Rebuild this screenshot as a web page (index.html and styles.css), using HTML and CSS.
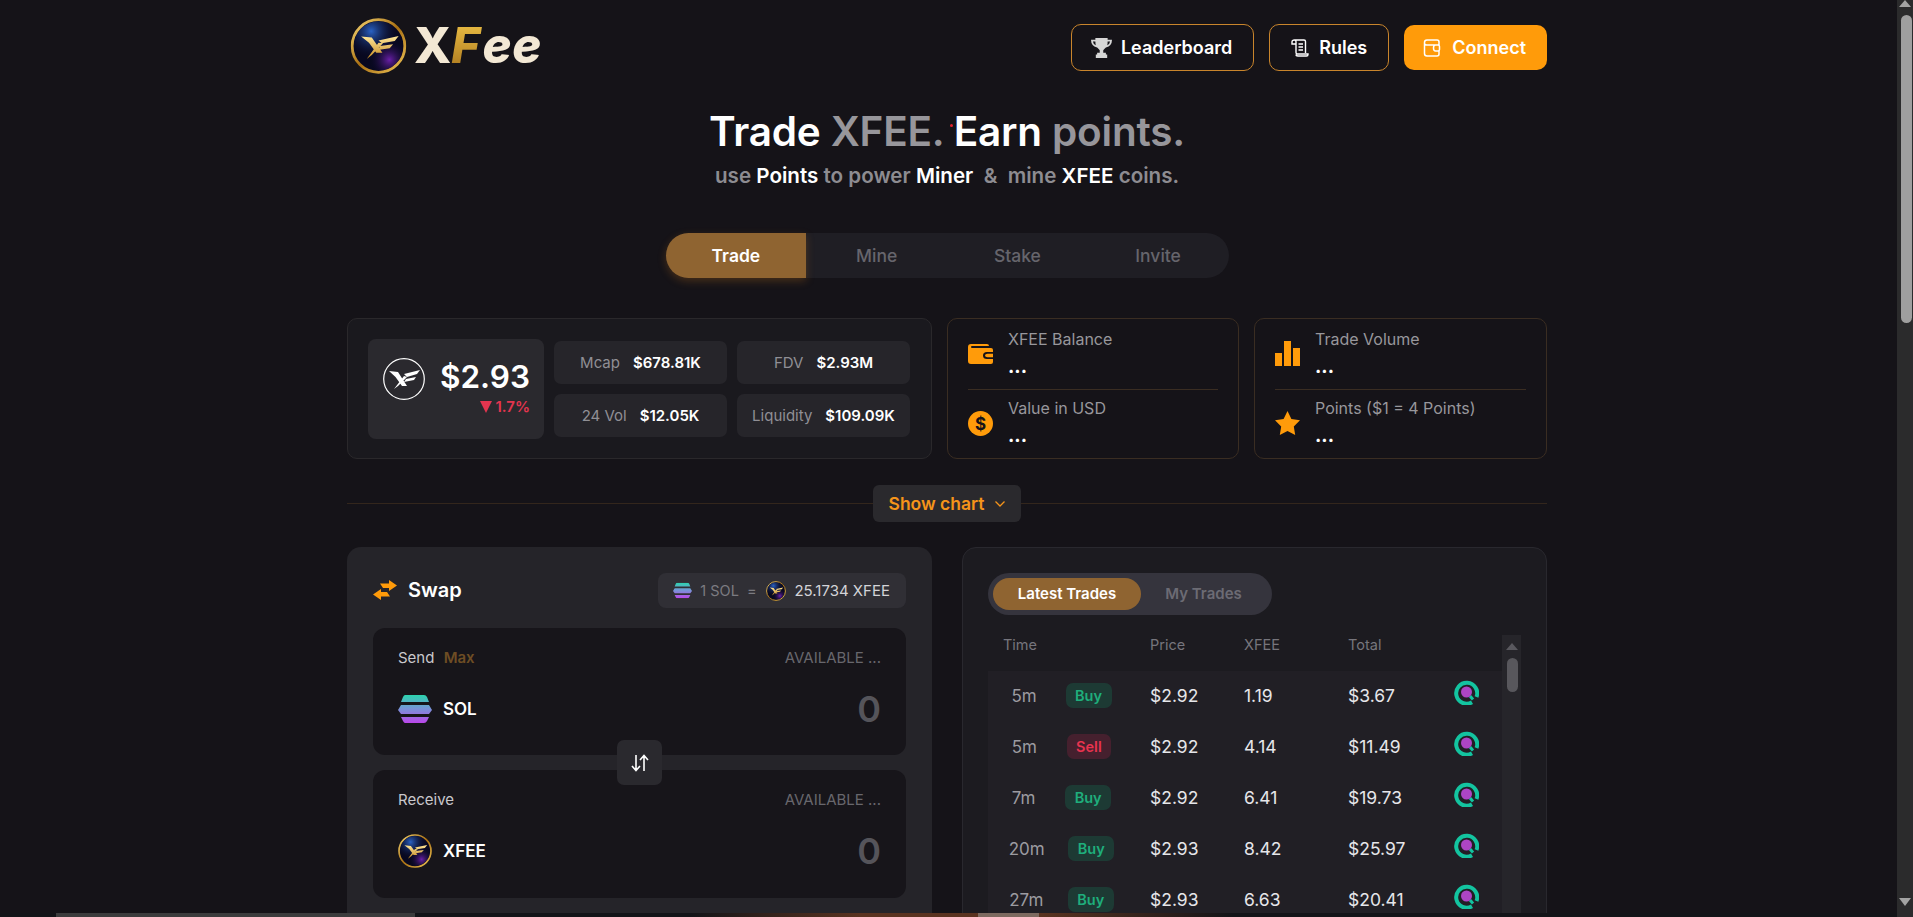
FILE: index.html
```html
<!DOCTYPE html>
<html lang="en">
<head>
<meta charset="utf-8">
<title>XFee</title>
<link rel="stylesheet" href="styles.css">
</head>
<body>
<div class="page">
  <div class="wrap">
    <header class="top">
      <a class="brand">
        <svg class="coin-lg" viewBox="0 0 100 100">
          <defs>
            <linearGradient id="gold" x1="0" y1="0" x2="1" y2="1"><stop offset="0" stop-color="#f7d774"/><stop offset=".5" stop-color="#a86f12"/><stop offset="1" stop-color="#f0c659"/></linearGradient>
            <linearGradient id="markgold" x1="0" y1="0" x2="0" y2="1"><stop offset="0" stop-color="#ffe79a"/><stop offset="1" stop-color="#c58a22"/></linearGradient>
            <radialGradient id="coinblue" cx=".35" cy=".2" r=".55"><stop offset="0" stop-color="#2a62c4"/><stop offset="1" stop-color="#0a0a2a" stop-opacity="0"/></radialGradient>
            <radialGradient id="coinpurple" cx=".72" cy=".78" r=".4"><stop offset="0" stop-color="#6a1fa8"/><stop offset="1" stop-color="#0a0a2a" stop-opacity="0"/></radialGradient>
            <linearGradient id="sol" x1="0" y1="0" x2="0" y2="1"><stop offset="0" stop-color="#2bd4ae"/><stop offset=".5" stop-color="#7a92d8"/><stop offset="1" stop-color="#bb46ea"/></linearGradient>
            <symbol id="coin" viewBox="0 0 100 100">
              <circle cx="50" cy="50" r="47" fill="#08081f" stroke="url(#gold)" stroke-width="5"/>
              <circle cx="50" cy="50" r="44" fill="url(#coinblue)"/>
              <circle cx="50" cy="50" r="44" fill="url(#coinpurple)"/>
              <path fill="url(#markgold)" d="M19 33 38 35 57 62 46 62 33 44ZM29 73 50 44 58 45 38 66ZM50 40 86 32 79 41 56 45ZM53 50 76 47 70 54 49 57Z"/>
            </symbol>
            <symbol id="solana" viewBox="0 0 34 28">
              <path fill="url(#sol)" d="M7 0H26Q28 0 29 2L31 7H3L5 2Q6 0 7 0ZM3 10H31L34 15 31 19H3L0 15ZM3 22H31L29 26Q28 28 26 28H7Q6 28 5 26Z"/>
            </symbol>
            <symbol id="dex" viewBox="0 0 25 25">
              <path fill="none" stroke="#13c4a0" stroke-width="4" d="M18 22.300A10.500 10.500 0 1 1 22.500 17"/>
              <path stroke="#13c4a0" stroke-width="3" d="M16 16 19 19.500"/>
              <circle cx="12.500" cy="12" r="5.500" fill="#ad45c4"/>
            </symbol>
          </defs>
          <use href="#coin"/>
        </svg>
        <span class="wordmark"><span class="wm-x">X</span><span class="wm-f">F</span><span>ee</span></span>
      </a>
      <nav class="actions">
        <a class="btn btn-line btn-lead">
          <svg class="ic21" viewBox="0 0 24 24" fill="#d6d6d6"><path d="M5 1H19V3H24Q24 10 17 12 15 14 14 15V18H17V20H18.500V24H5.500V20H7V18H10V15Q9 14 7 12 0 10 0 3H5ZM2.200 5Q2.600 8 5.500 9.500Q5 7.500 5 5ZM21.800 5H19Q19 7.500 18.500 9.500Q21.400 8 21.800 5Z"/></svg>
          Leaderboard
        </a>
        <a class="btn btn-line">
          <svg class="ic18" viewBox="0 0 18 18" fill="none" stroke="#fff" stroke-width="1.400"><path d="M3.500 1H13Q14.500 1 14.500 2.500V14M3.500 1Q1 1 1 3V5H5M3.500 1Q5 1 5 3V13.500Q5 14.500 6 15H17V15.500Q17 17 15.500 17H7Q5 17 5 15.500M7.500 5H12M7.500 8H12M7.500 11H12"/></svg>
          Rules
        </a>
        <a class="btn btn-fill">
          <svg class="ic18" viewBox="0 0 18 18" fill="none" stroke="#fff" stroke-width="1.500"><path d="M16 6V3Q16 1 14 1H4Q1.500 1 1.500 3.500V14.500Q1.500 17 4 17H14Q16 17 16 15V12M1.500 4.500Q2 6 4 6H15Q16.500 6 16.500 7.500V10.500Q16.500 12 15 12H12.500Q10.500 12 10.500 9T12.500 6"/></svg>
          Connect
        </a>
      </nav>
    </header>

    <section class="hero">
      <h1><b>Trade</b> XFEE. <b>Earn</b> points.</h1>
      <p>use <b>Points</b> to power <b>Miner</b> &nbsp;&amp;&nbsp; mine <b>XFEE</b> coins.</p>
    </section>

    <div class="tabs-row">
      <div class="tabs">
        <a class="tab tab-on">Trade</a>
        <a class="tab">Mine</a>
        <a class="tab">Stake</a>
        <a class="tab">Invite</a>
      </div>
    </div>

    <section class="stats">
      <div class="market">
        <div class="price-box">
          <svg class="xf-round" viewBox="0 0 42 42">
            <circle cx="21" cy="21" r="20.300" fill="none" stroke="#fff" stroke-width="1.200"/>
            <path fill="#fff" d="M6 13 15 14 24 28 19 28 12.500 19ZM11 31 21 18 24 19 15 28ZM21 16 37 12 34 16 24 19ZM23 21 33 19 31 22 21 24Z"/>
          </svg>
          <div class="price-num">
            <div class="price">$2.93</div>
            <div class="change"><span class="tri"></span>1.7%</div>
          </div>
        </div>
        <div class="kv-grid">
          <div class="kv"><span>Mcap</span><b>$678.81K</b></div>
          <div class="kv"><span>FDV</span><b>$2.93M</b></div>
          <div class="kv"><span>24 Vol</span><b>$12.05K</b></div>
          <div class="kv"><span>Liquidity</span><b>$109.09K</b></div>
        </div>
      </div>
      <div class="info-card">
        <div class="info">
          <svg class="ic25" viewBox="0 0 25 25" fill="#ff9b0a"><path d="M3 3H19Q21 3 21 5H4Q3 5 3 6T4 7H23Q25 7 25 9V11H19Q15 11 15 14.500T19 18H25V21Q25 23 23 23H3Q0 23 0 20V6Q0 3 3 3ZM19.500 12.700H25V16.300H19.500Q17 16.300 17 14.500T19.500 12.700Z"/></svg>
          <div class="info-text"><span>XFEE Balance</span><b>...</b></div>
        </div>
        <div class="info">
          <svg class="ic25" viewBox="0 0 25 25"><circle cx="12.500" cy="12.500" r="12.500" fill="#ff9b0a"/><text x="12.500" y="18.500" text-anchor="middle" class="dollar">$</text></svg>
          <div class="info-text"><span>Value in USD</span><b>...</b></div>
        </div>
      </div>
      <div class="info-card">
        <div class="info">
          <svg class="ic25" viewBox="0 0 25 25" fill="#ff9b0a"><rect x="0" y="12" width="7" height="13"/><rect x="9" y="0" width="7" height="25"/><rect x="18" y="7" width="7" height="18"/></svg>
          <div class="info-text"><span>Trade Volume</span><b>...</b></div>
        </div>
        <div class="info">
          <svg class="ic25" viewBox="0 0 25 25" fill="#ff9b0a"><path d="M12.500 0 16.400 8 25 9.300 18.800 15.500 20.200 24 12.500 20 4.800 24 6.200 15.500 0 9.300 8.600 8Z"/></svg>
          <div class="info-text"><span>Points ($1 = 4 Points)</span><b>...</b></div>
        </div>
      </div>
    </section>

    <div class="chart-toggle">
      <a class="show-chart">Show chart
        <svg class="chev" viewBox="0 0 12 8" fill="none" stroke="#f5941a" stroke-width="1.300"><path d="M1.500 1.500 6 6 10.500 1.500"/></svg>
      </a>
    </div>

    <section class="panels">
      <div class="swap">
        <div class="swap-head">
          <h2>
            <svg class="swap-ic" viewBox="0 0 24 20" fill="#ff9b0a"><path d="M7 3.500H16V0L24 5.500 16 11V8H10ZM17 16.500H8V20L0 14.500 8 9V12H14Z"/></svg>
            Swap
          </h2>
          <div class="rate">
            <svg class="ic19" viewBox="0 0 34 28"><use href="#solana"/></svg>
            <span class="rate-dim">1 SOL</span>
            <span class="rate-eq">=</span>
            <svg class="ic19r" viewBox="0 0 100 100"><use href="#coin"/></svg>
            <span class="rate-val">25.1734 XFEE</span>
          </div>
        </div>
        <div class="boxes">
          <div class="box box-send">
            <div class="box-top">
              <span class="box-label">Send <b class="max">Max</b></span>
              <span class="avail">AVAILABLE ...</span>
            </div>
            <div class="box-main">
              <span class="token"><svg class="tok-ic" viewBox="0 0 34 28"><use href="#solana"/></svg>SOL</span>
              <span class="amount">0</span>
            </div>
          </div>
          <a class="flip">
            <svg class="ic18" viewBox="0 0 18 18" fill="none" stroke="#fff" stroke-width="1.600"><path d="M5 1V16M1 12 5 16.500 9 12M13 17V2M9 6 13 1.500 17 6"/></svg>
          </a>
          <div class="box">
            <div class="box-top">
              <span class="box-label">Receive</span>
              <span class="avail">AVAILABLE ...</span>
            </div>
            <div class="box-main">
              <span class="token"><svg class="tok-ic" viewBox="0 0 100 100"><use href="#coin"/></svg>XFEE</span>
              <span class="amount">0</span>
            </div>
          </div>
        </div>
      </div>

      <div class="trades">
        <div class="pill">
          <a class="pill-on">Latest Trades</a>
          <a class="pill-off">My Trades</a>
        </div>
        <div class="table">
          <div class="table-main">
            <div class="tr th">
              <span class="th-time">Time</span><span>Price</span><span>XFEE</span><span>Total</span><span></span>
            </div>
            <div class="tbody">
              <div class="tr"><span class="when"><i>5m</i><em class="buy">Buy</em></span><span>$2.92</span><span>1.19</span><span>$3.67</span><svg class="dex" viewBox="0 0 25 25"><use href="#dex"/></svg></div>
              <div class="tr"><span class="when"><i>5m</i><em class="sell">Sell</em></span><span>$2.92</span><span>4.14</span><span>$11.49</span><svg class="dex" viewBox="0 0 25 25"><use href="#dex"/></svg></div>
              <div class="tr"><span class="when"><i>7m</i><em class="buy">Buy</em></span><span>$2.92</span><span>6.41</span><span>$19.73</span><svg class="dex" viewBox="0 0 25 25"><use href="#dex"/></svg></div>
              <div class="tr"><span class="when"><i>20m</i><em class="buy">Buy</em></span><span>$2.93</span><span>8.42</span><span>$25.97</span><svg class="dex" viewBox="0 0 25 25"><use href="#dex"/></svg></div>
              <div class="tr"><span class="when"><i>27m</i><em class="buy">Buy</em></span><span>$2.93</span><span>6.63</span><span>$20.41</span><svg class="dex" viewBox="0 0 25 25"><use href="#dex"/></svg></div>
            </div>
          </div>
          <div class="mini-scroll"><span class="mini-up"></span><span class="mini-thumb"></span></div>
        </div>
      </div>
    </section>
  </div>
</div>
<aside class="vscroll"><span class="v-up"></span><span class="v-thumb"></span><span class="v-down"></span></aside>
<span class="red-dot"></span>
<div class="hbar"></div>
</body>
</html>
```
FILE: styles.css
```css
* { box-sizing: border-box; }
html, body { margin: 0; height: 917px; overflow: hidden; }
body {
  display: flex;
  background: #151318;
  color: #fff;
  font-family: Inter, "Liberation Sans", sans-serif;
  position: relative;
}
a { display: flex; align-items: center; cursor: pointer; }
.page { flex: 1; min-width: 0; height: 917px; overflow: hidden; }
.wrap { width: 1200px; margin-left: 347px; padding-top: 24px; }

.top { display: flex; justify-content: space-between; height: 47px; }
.brand { display: flex; align-items: center; height: 56px; margin-top: -6px; padding-left: 3px; }
.coin-lg { width: 57px; height: 56px; flex: none; }
.wordmark {
  font-size: 49px; font-weight: 800; line-height: 56px;
  color: #f3e8d4; margin-left: 7px; font-style: italic; letter-spacing: .5px;
}
.wm-x { font-style: normal; letter-spacing: 0; }
.wm-f {
  background: linear-gradient(180deg, #f2c649, #a5711a);
  -webkit-background-clip: text; background-clip: text; color: transparent;
  padding-right: 2px;
}
.actions { display: flex; gap: 15px; align-items: center; }
.btn { height: 47px; border-radius: 10px; padding: 0 21px; gap: 10px; font-size: 18px; font-weight: 600; color: #fff; }
.btn-line { border: 1px solid #c9852c; gap: 10px; }
.btn-lead { padding-left: 19px; gap: 9px; }
.btn-fill { background: #ff9b0a; height: 45px; gap: 11px; padding-left: 19px; }
.ic21 { width: 21px; height: 21px; }
.ic18 { width: 18px; height: 18px; }
.ic25 { width: 25px; height: 25px; flex: none; }

.hero { text-align: center; margin-top: 33px; height: 88px; }
.hero h1 { margin: 0; font-size: 40.500px; line-height: 56px; font-weight: 600; color: #97969b; letter-spacing: -.2px; }
.hero p { margin: 0; font-size: 20.600px; line-height: 32px; font-weight: 600; color: #8d8c91; }
.hero b { color: #fff; font-weight: 600; }

.tabs-row { display: flex; justify-content: center; margin-top: 41px; }
.tabs { display: grid; grid-template-columns: repeat(4, 140.750px); height: 45px; border-radius: 23px; background: #1f1e24; }
.tab { justify-content: center; font-size: 17.500px; font-weight: 500; color: #66656c; }
.tab-on { background: #8f6431; color: #fff; font-weight: 600; border-radius: 23px 0 0 23px; box-shadow: 0 3px 8px rgba(200, 120, 30, .28); }

.stats { display: grid; grid-template-columns: 585px 292px 293px; gap: 15px; margin-top: 40px; height: 141px; }
.market { display: flex; align-items: center; gap: 10px; padding: 0 21px 0 20px; background: #1a191e; border: 1px solid #2a282b; border-radius: 10px; }
.price-box { width: 176px; height: 100px; flex: none; background: #2a292e; border-radius: 8px; display: flex; align-items: flex-start; padding: 19px 15px; gap: 15px; }
.xf-round { width: 42px; height: 42px; flex: none; }
.price-num { text-align: right; }
.price { font-size: 31.500px; font-weight: 600; line-height: 38px; }
.change { font-size: 15px; font-weight: 600; color: #e3354f; line-height: 20px; margin-top: 1px; display: flex; justify-content: flex-end; align-items: center; gap: 4px; }
.tri { width: 0; height: 0; border: 6px solid transparent; border-top: 12px solid #e3354f; border-bottom: 0; }
.kv-grid { flex: 1; display: grid; grid-template-columns: 1fr 1fr; grid-auto-rows: 43px; gap: 10px; }
.kv { display: flex; justify-content: center; align-items: center; gap: 13px; background: #26252a; border-radius: 7px; font-size: 15px; }
.kv span { color: #908f95; }
.kv b { font-weight: 600; }

.info-card { background: #151318; border: 1px solid #3a2d22; border-radius: 10px; padding: 0 20px; display: flex; flex-direction: column; }
.info { height: 69.500px; display: flex; align-items: center; gap: 15px; }
.info + .info { border-top: 1px solid #3a2d22; }
.info-text { display: flex; flex-direction: column; justify-content: space-between; height: 47px; margin-top: -2px; }
.info + .info .info-text { margin-top: -4px; }
.info-text span { font-size: 16px; line-height: 20px; color: #98979c; }
.info-text b { font-size: 19px; font-weight: 700; line-height: 18px; }
.dollar { font: 700 17px Inter, sans-serif; fill: #151318; }

.chart-toggle {
  margin-top: 26px; height: 37px; display: flex; justify-content: center;
  background: linear-gradient(#33261c, #33261c) center / 100% 1px no-repeat;
}
.show-chart { width: 148px; justify-content: center; gap: 9px; background: #2a292d; border-radius: 6px; color: #f5941a; font-size: 17.500px; font-weight: 600; }
.chev { width: 12px; height: 8px; }

.panels { display: grid; grid-template-columns: 585px 585px; gap: 30px; margin-top: 25px; }
.swap { height: 520px; padding: 26px; background: #252429; border-radius: 14px; }
.swap-head { display: flex; justify-content: space-between; align-items: center; height: 35px; }
.swap-head h2 { margin: 0 0 2px; display: flex; align-items: center; gap: 11px; font-size: 20px; font-weight: 600; }
.swap-ic { width: 24px; height: 20px; }
.rate { display: flex; align-items: center; height: 35px; padding: 0 16px 0 15px; gap: 8px; background: #302f35; border-radius: 8px; font-size: 14.500px; color: #d4d4d8; }
.rate-val { font-size: 15px; }
.ic19 { width: 19px; height: 19px; }
.ic19r { width: 20px; height: 20px; margin-left: 2px; }
.rate-dim { color: #7c7b81; }
.rate-eq { color: #7c7b81; }
.boxes { position: relative; margin-top: 20px; display: flex; flex-direction: column; gap: 15px; }
.box { height: 128px; background: #17151a; border-radius: 12px; padding: 20px 25px; }
.box-send { height: 127px; }
.box-top { display: flex; justify-content: space-between; height: 20px; font-size: 15px; line-height: 20px; }
.box-label { color: #c9c8cc; }
.max { color: #6e4d24; font-weight: 600; margin-left: 5px; }
.avail { color: #68676d; }
.box-main { display: flex; justify-content: space-between; align-items: center; margin-top: 23px; height: 36px; }
.token { display: flex; align-items: center; gap: 11px; font-size: 17px; font-weight: 600; }
.tok-ic { width: 34px; height: 34px; }
.amount { font-size: 36px; font-weight: 600; color: #55545a; }
.flip {
  position: absolute; left: 244px; top: 112px; width: 45px; height: 45px;
  justify-content: center; background: #2a292e; border-radius: 7px;
}

.trades { height: 520px; padding: 25px; background: #1c1b20; border: 1px solid #29282e; border-radius: 14px; }
.pill { display: flex; align-items: center; width: 284px; height: 42px; padding: 0 5px; border-radius: 21px; background: #35343d; font-size: 15px; font-weight: 600; line-height: 16px; }
.pill-on { width: 148px; height: 32px; justify-content: center; border-radius: 16px; background: #8f6431; padding-bottom: 1px; }
.pill-off { width: 125px; justify-content: center; color: #6c6b74; padding-bottom: 1px; }
.table { display: flex; margin-top: 20px; }
.table-main { width: 514px; flex: none; }
.tr {
  display: grid; grid-template-columns: 153px 94px 104px 106px 25px; align-items: center;
  height: 51px; padding: 0 0 2px 9px; font-size: 17.500px; color: #e6e6ea;
}
.th { height: 36px; padding-bottom: 17px; font-size: 14.500px; color: #76757c; }
.th-time { padding-left: 6px; }
.tbody { background: #211f25; }
.when { width: 129px; display: flex; justify-content: space-around; align-items: center; }
.when i { font-style: normal; color: #9c9ba0; font-size: 17px; }
.when em { font-style: normal; font-size: 14.500px; font-weight: 600; height: 25px; line-height: 25px; border-radius: 7px; padding: 0 9.500px; }
.buy { background: #1d3a34; color: #1fae7c; }
.sell { background: #45202e; color: #e8334f; }
.dex { width: 25px; height: 25px; margin-top: -6px; }
.mini-scroll { width: 19px; height: 300px; background: #26252a; display: flex; flex-direction: column; align-items: center; padding-top: 8px; }
.mini-up { width: 0; height: 0; border: 6px solid transparent; border-bottom: 7px solid #59585e; border-top: 0; }
.mini-thumb { width: 11px; height: 34px; margin-top: 8px; margin-right: -1px; background: #58575c; border-radius: 6px; }

.vscroll { width: 16px; height: 917px; flex: none; background: #2b2b2c; display: flex; flex-direction: column; align-items: center; }
.v-up { width: 0; height: 0; border: 6px solid transparent; border-bottom: 7px solid #a3a3a3; border-top: 0; }
.v-thumb { width: 11px; height: 308px; margin-top: 8px; margin-left: 2px; background: #9f9f9f; border-radius: 6px; }
.v-down { width: 0; height: 0; margin-top: auto; margin-bottom: 11px; border: 6px solid transparent; border-top: 8px solid #a3a3a3; border-bottom: 0; }

.red-dot { position: absolute; left: 950px; top: 124px; width: 3px; height: 3px; border-radius: 50%; background: #e3202f; }
.hbar {
  position: absolute; left: 0; right: 16px; bottom: 0; height: 4px;
  background:
    linear-gradient(#7d6a60, #7d6a60) 978px 0 / 61px 100% no-repeat,
    linear-gradient(#3c3c3d, #3c3c3d) 56px 0 / 359px 100% no-repeat,
    linear-gradient(90deg, #131418 690px, #5a3320 860px, #5a3320 1040px, #131418 1233px);
}
```
